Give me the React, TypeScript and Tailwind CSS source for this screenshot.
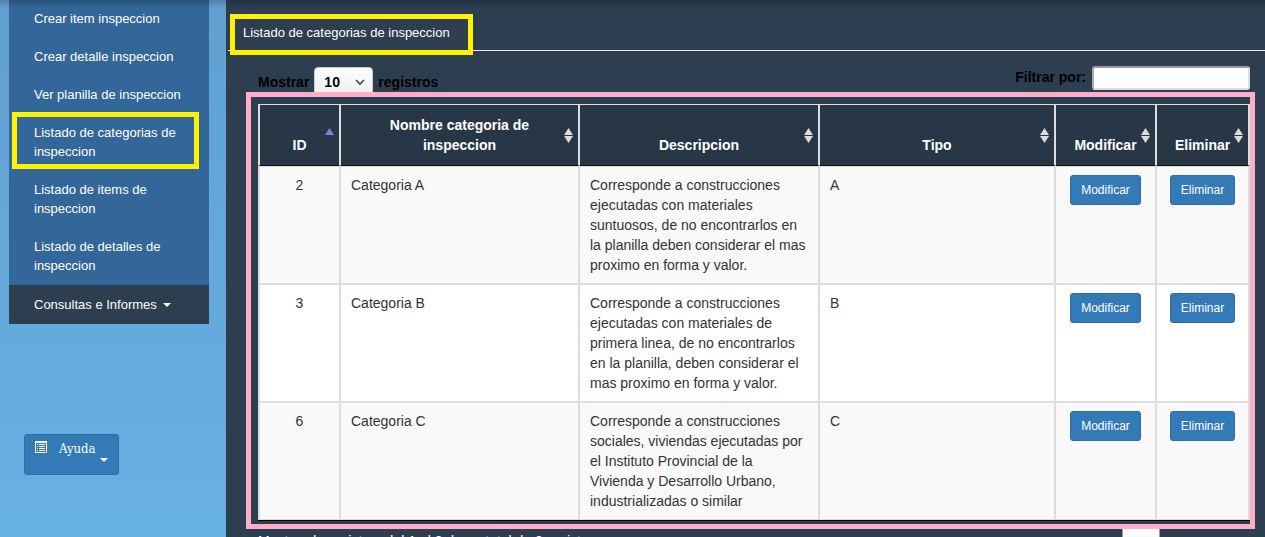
import React from "react";

const menu = [
  { label: "Crear item inspeccion" },
  { label: "Crear detalle inspeccion" },
  { label: "Ver planilla de inspeccion" },
  { label: "Listado de categorias de inspeccion", active: true },
  { label: "Listado de items de inspeccion" },
  { label: "Listado de detalles de inspeccion" },
];

const columns = [
  { label: "ID", width: "w-[83px]", sorted: true },
  { label: "Nombre categoria de inspeccion", width: "w-[239px]" },
  { label: "Descripcion", width: "w-[240px]" },
  { label: "Tipo", width: "w-[236px]" },
  { label: "Modificar", width: "w-[101px]" },
  { label: "Eliminar", width: "w-[93px]" },
];

const rows = [
  {
    id: 2,
    name: "Categoria A",
    text: "Corresponde a construcciones ejecutadas con materiales suntuosos, de no encontrarlos en la planilla deben considerar el mas proximo en forma y valor.",
    type: "A",
  },
  {
    id: 3,
    name: "Categoria B",
    text: "Corresponde a construcciones ejecutadas con materiales de primera linea, de no encontrarlos en la planilla, deben considerar el mas proximo en forma y valor.",
    type: "B",
  },
  {
    id: 6,
    name: "Categoria C",
    text: "Corresponde a construcciones sociales, viviendas ejecutadas por el Instituto Provincial de la Vivienda y Desarrollo Urbano, industrializadas o similar",
    type: "C",
  },
];

function Caret({ className = "" }: { className?: string }) {
  return (
    <svg className={`h-1 w-2 shrink-0 ${className}`} viewBox="0 0 8 4" fill="currentColor" aria-hidden="true">
      <path d="M0 0h8L4 4z" />
    </svg>
  );
}

function SortIcon({ sorted }: { sorted?: boolean }) {
  return (
    <svg className="absolute top-[23px] right-[5px] h-[15px] w-[9px]" viewBox="0 0 9 15" aria-hidden="true">
      <path d="M4.500 0 9 7H0z" fill={sorted ? "#7f7fdc" : "#dcdcdc"} />
      {!sorted && <path d="M0 8h9l-4.500 7z" fill="#dcdcdc" />}
    </svg>
  );
}

function ActionButton({ children }: { children: React.ReactNode }) {
  return (
    <button className="rounded-[3px] border border-[#2e6da4] bg-[#337ab7] px-[10px] py-[5px] text-xs leading-[18px] text-white">
      {children}
    </button>
  );
}

function Sidebar() {
  return (
    <aside className="w-[226px] shrink-0 pl-[9px]">
      <nav className="w-[200px] text-[13px] leading-[19px] text-white">
        <ul className="bg-[#336699]">
          {menu.map((item) => (
            <li key={item.label} className="relative">
              <a href="#" className="block px-[25px] pt-[9px] pb-[10px]">
                {item.label}
              </a>
              {item.active && (
                <span className="pointer-events-none absolute -top-[2px] right-[10px] bottom-[2px] left-[3px] border-[5px] border-[#fff200]" />
              )}
            </li>
          ))}
        </ul>
        <a href="#" className="flex items-center gap-[6px] bg-[#2c3e50] px-[25px] py-[10px]">
          Consultas e Informes
          <Caret />
        </a>
      </nav>
      <button className="mt-[110px] ml-[15px] flex h-[41px] w-[95px] items-start rounded-[3px] border border-[#2e6da4] bg-[#337ab7] pt-1 pl-[10px] text-left font-['DejaVu_Serif_Condensed','DejaVu_Serif',serif] text-[13px] leading-[19px] text-white">
        <svg className="mt-[2px] h-3 w-3 shrink-0" viewBox="0 0 12 12" fill="none" stroke="currentColor" aria-hidden="true">
          <path d="M.5 1v10.500h11V1" />
          <path d="M0 1h12" strokeWidth="2" />
          <path d="M2 3.500h1M4 3.500h6M2 5.500h1M4 5.500h6M2 7.500h1M4 7.500h6M2 9.500h1M4 9.500h6" />
        </svg>
        <span className="ml-3">Ayuda</span>
        <Caret className="mt-[19px] ml-1" />
      </button>
    </aside>
  );
}

export default function App() {
  return (
    <div className="relative flex h-screen overflow-hidden bg-linear-to-b from-[#629fd1] to-[#66b1e4] font-['Liberation_Sans',Arial,sans-serif]">
      <Sidebar />
      <main className="min-w-0 flex-1 bg-[#2c3e50] pl-[2px] text-sm leading-5">
        <header className="relative border-b border-[#e5e5e5] pt-[22px] pb-2 pl-[15px]">
          <h1 className="relative inline-block text-[13px] leading-[19px] text-white">
            Listado de categorias de inspeccion
            <span className="pointer-events-none absolute -top-[9px] -right-[23px] -bottom-[13px] -left-[13px] border-[5px] border-[#fff200]" />
          </h1>
        </header>

        <div className="pr-[15px] pl-[30px]">
          <div className="flex items-start justify-between pt-[15px] font-bold text-black">
            <div className="flex items-center gap-[5px] pt-px">
              <label htmlFor="length">Mostrar</label>
              <span className="relative">
                <select
                  id="length"
                  defaultValue="10"
                  className="block h-[30px] w-[59px] appearance-none rounded-[4px] border border-[#cccccc] bg-linear-to-b from-white to-[#ededed] pl-[9px] font-bold"
                >
                  <option>10</option>
                  <option>25</option>
                  <option>50</option>
                </select>
                <svg className="pointer-events-none absolute top-3 right-2 h-[7px] w-[10px]" viewBox="0 0 10 7" fill="none" stroke="#444" strokeWidth="1.600" aria-hidden="true">
                  <path d="m1 1 4 4 4-4" />
                </svg>
              </span>
              <label htmlFor="length">registros</label>
            </div>
            <div className="flex items-start gap-[6px]">
              <label htmlFor="filter" className="pt-px">Filtrar por:</label>
              <input
                id="filter"
                className="h-6 w-[158px] rounded-[3px] border-2 border-t-[#999999] border-r-[#dddddd] border-b-[#dddddd] border-l-[#aaaaaa] bg-white px-1 font-normal"
              />
            </div>
          </div>

          <div className="relative mt-[7px]">
            <table className="w-full table-fixed border-separate border-spacing-0 border-b border-black">
              <thead>
                <tr>
                  {columns.map((c) => (
                    <th
                      key={c.label}
                      className={`${c.width} relative border-t border-r-2 border-b border-t-[#dddddd] border-r-[#dddddd] border-b-[#111111] bg-[#273746] px-[10px] py-[10px] align-bottom font-bold text-white first:border-l-2 first:border-l-[#dddddd]`}
                    >
                      <span className="block px-2">{c.label}</span>
                      <SortIcon sorted={c.sorted} />
                    </th>
                  ))}
                </tr>
              </thead>
              <tbody className="text-[#333333] [&_td]:border-r-2 [&_td]:border-b-2 [&_td]:border-[#dddddd] [&_td]:px-[10px] [&_td]:py-2 [&_td]:align-top [&_td:first-child]:border-l-2 [&_tr:first-child_td]:border-t [&_tr:last-child_td]:border-b">
                {rows.map((r) => (
                  <tr key={r.id} className="bg-white odd:bg-[#f9f9f9]">
                    <td className="text-center">{r.id}</td>
                    <td>{r.name}</td>
                    <td>{r.text}</td>
                    <td>{r.type}</td>
                    <td className="text-center">
                      <ActionButton>Modificar</ActionButton>
                    </td>
                    <td className="text-center">
                      <ActionButton>Eliminar</ActionButton>
                    </td>
                  </tr>
                ))}
              </tbody>
            </table>
            <div className="pointer-events-none absolute -top-3 -right-[5px] -bottom-2 -left-3 z-10 border-[5px] border-[#ffaec9]" />
          </div>

          <div className="flex items-start justify-between pt-[7px] text-white">
            <p className="pt-[3px]">Mostrando registros del 1 al 3 de un total de 3 registros</p>
            <button className="mr-[90px] h-10 w-[38px] border border-[#979797] bg-linear-to-b from-white to-[#dcdcdc] text-[#333333]">
              1
            </button>
          </div>
        </div>
      </main>
      <div className="pointer-events-none absolute inset-x-0 top-0 h-2 bg-linear-to-b from-black/20 to-transparent" />
    </div>
  );
}
